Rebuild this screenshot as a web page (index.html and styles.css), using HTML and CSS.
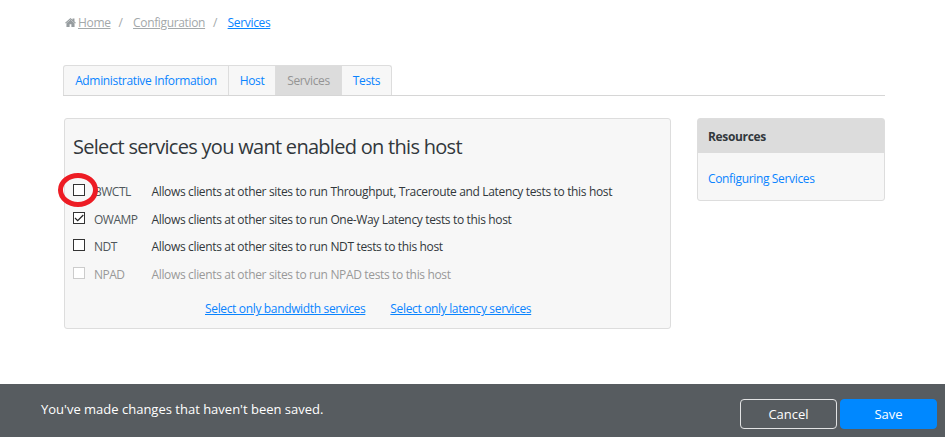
FILE: index.html
```html
<!DOCTYPE html>
<html lang="en">
<head>
<meta charset="utf-8">
<title>Services</title>
<link rel="stylesheet" href="styles.css">
</head>
<body>
<div class="page">
  <nav class="breadcrumb">
    <svg class="home" viewBox="0 0 12 10"><path d="M6 0 8.300 2V.5H10.400v3.300L12 5.200l-.8.9L6 1.700.8 6.100 0 5.200z"/><path d="M6 1.900 10.500 5.800v4.200H7V7H5v3H1.500V5.800z"/></svg>
    <a href="#">Home</a><span class="sep">/</span><a href="#">Configuration</a><span class="sep">/</span><a class="current" href="#">Services</a>
  </nav>
  <nav class="tabs">
    <div class="tab t1">Administrative Information</div>
    <div class="tab t2">Host</div>
    <div class="tab t3 active">Services</div>
    <div class="tab t4">Tests</div>
  </nav>
  <div class="columns">
    <main class="panel">
      <h1>Select services you want enabled on this host</h1>
      <div class="row">
        <span class="check"><svg class="ring" viewBox="0 0 42 36"><ellipse cx="21" cy="18" rx="17.500" ry="14.500"/></svg></span>
        <span class="name">BWCTL</span><span class="desc">Allows clients at other sites to run Throughput, Traceroute and Latency tests to this host</span>
      </div>
      <div class="row">
        <span class="check"><svg class="tick" viewBox="0 0 12 12"><path d="M2 6 4.700 8.700 10.300 3"/></svg></span>
        <span class="name">OWAMP</span><span class="desc">Allows clients at other sites to run One-Way Latency tests to this host</span>
      </div>
      <div class="row">
        <span class="check"></span>
        <span class="name">NDT</span><span class="desc">Allows clients at other sites to run NDT tests to this host</span>
      </div>
      <div class="row disabled">
        <span class="check"></span>
        <span class="name">NPAD</span><span class="desc">Allows clients at other sites to run NPAD tests to this host</span>
      </div>
      <div class="links"><a href="#">Select only bandwidth services</a><a href="#">Select only latency services</a></div>
    </main>
    <aside class="resources">
      <h2>Resources</h2>
      <a href="#">Configuring Services</a>
    </aside>
  </div>
</div>
<footer class="savebar">
  <p>You've made changes that haven't been saved.</p>
  <button class="cancel">Cancel</button>
  <button class="save">Save</button>
</footer>
</body>
</html>
```
FILE: styles.css
```css
* { box-sizing: border-box; }
body {
  margin: 0;
  height: 437px;
  display: flex;
  flex-direction: column;
  overflow: hidden;
  background: #fff;
  color: #32383c;
  font: 12px/18px "Open Sans", sans-serif;
  letter-spacing: -0.345px;
}
a { color: #0a84ff; }
.page { height: 384px; padding: 14px 60px 0 63px; }
.breadcrumb { display: flex; height: 18px; padding-left: 2px; white-space: nowrap; }
.breadcrumb a { color: #a3a8aa; }
.breadcrumb a.current { color: #0a84ff; }
.home { width: 11px; height: 9px; margin: 4px 2px 0 0; fill: #969c9f; }
.sep { width: 22.500px; padding-left: 8px; color: #a3a8aa; }
.tabs { display: flex; height: 32px; margin-top: 32px; padding-top: 1px; border-bottom: 1px solid #d6d6d6; }
.tab {
  height: 30px;
  background: #f7f7f7;
  border-top: 1px solid #ddd;
  border-right: 1px solid #ddd;
  color: #0a84ff;
  line-height: 29px;
  text-align: center;
  white-space: nowrap;
}
.t1 { width: 166px; border-left: 1px solid #ddd; border-radius: 3px 0 0; }
.t2 { width: 47px; }
.t3 { width: 66px; }
.t4 { width: 50px; border-radius: 0 3px 0 0; }
.tab.active { background: #dcdcdc; color: #949494; }
.columns { display: flex; justify-content: space-between; align-items: flex-start; margin-top: 22px; }
.panel {
  width: 607px;
  height: 211px;
  margin-left: 1px;
  padding: 14px 7px 0 8px;
  border: 1px solid #ddd;
  border-radius: 3px;
  background: #f7f7f7;
}
h1 { margin: 0 0 17px; font-size: 20px; line-height: 27px; height: 28px; font-weight: 400; letter-spacing: -0.710px; white-space: nowrap; }
.row { display: flex; height: 27.600px; line-height: 27.600px; white-space: nowrap; }
.check { position: relative; width: 12px; height: 12px; margin: 6px 9px 0 0; border: 1px solid #333; background: #fff; }
.name { width: 57.500px; color: #50575b; letter-spacing: -0.500px; }
.tick { position: absolute; left: -1px; top: -1px; width: 12px; height: 12px; fill: none; stroke: #222; stroke-width: 1.200; }
.ring { position: absolute; left: -17px; top: -13px; width: 42px; height: 36px; fill: none; stroke: #ed1c24; stroke-width: 5; z-index: 1; }
.disabled, .disabled .name { color: #999; }
.disabled .check { border-color: #ccc; }
.links { display: flex; gap: 25px; margin: 12px 0 0 132px; white-space: nowrap; }
.resources { width: 188px; height: 83px; border: 1px solid #ddd; border-radius: 3px; background: #f7f7f7; }
.resources h2 { margin: 0 0 17px; padding-left: 10px; height: 34px; font-size: 12px; line-height: 35px; background: #dcdcdc; }
.resources a { display: block; padding-left: 10px; text-decoration: none; }
.savebar { display: flex; height: 53px; padding: 15px 8px 0 41px; background: #575c60; color: #fff; letter-spacing: 0; }
.savebar p { margin: 0 auto 0 0; font-size: 13px; line-height: 20px; }
.savebar button { width: 97px; height: 30px; margin-left: 3px; padding: 0; border: 1px solid #e2e3e4; border-radius: 4px; background: transparent; color: #fff; font: 13px/28px "Open Sans", sans-serif; }
.savebar .save { border-color: #0088ff; background: #0088ff; }
```
